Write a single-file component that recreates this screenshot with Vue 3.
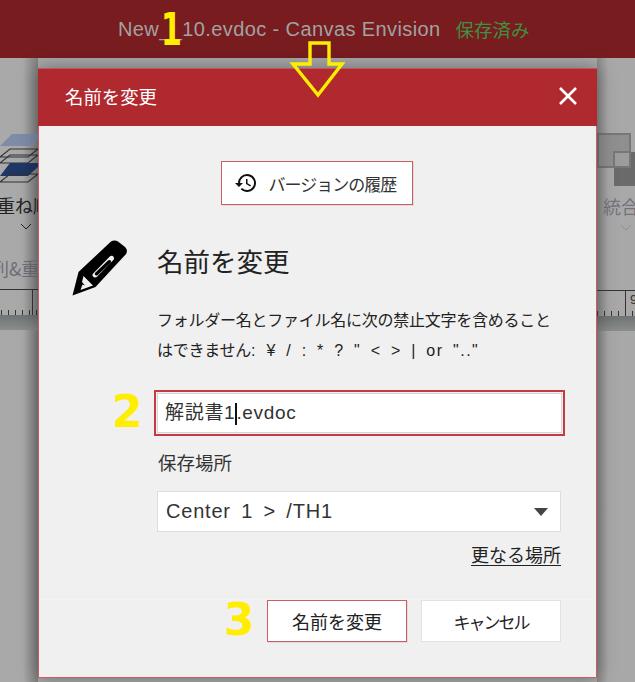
<script setup>
const ticks = Array.from({ length: 8 })
</script>

<template>
  <div class="page">
    <header class="topbar">
      <span class="doc">New__10.evdoc - Canvas Envision</span>
      <span class="saved">保存済み</span>
    </header>

    <div class="stage">
      <aside class="side side-left">
        <svg class="layers" width="38" height="52" viewBox="0 0 38 52">
          <path d="M12 0H38V6L30 12H0Z" fill="#7e8ca8" />
          <path d="M10 15H38L28 23H0Z" fill="none" stroke="#333" stroke-width="1.2" />
          <path d="M10 21H38L28 29H0Z" fill="none" stroke="#333" stroke-width="1.2" />
          <path d="M10 29H38V33L28 42H0Z" fill="#1f3764" />
          <path d="M10 40H38L28 48H0Z" fill="none" stroke="#333" stroke-width="1.2" />
        </svg>
        <div class="cut-label dark">重ね順</div>
        <svg class="chev" width="12" height="7" viewBox="0 0 12 7"><path d="M1 1L6 6L11 1" fill="none" stroke="#222" stroke-width="1" /></svg>
        <div class="group-label">列&amp;重ね</div>
        <div class="ruler ruler-left">
          <i v-for="(t, i) in ticks" :key="i" class="tick"></i>
          <i class="mark"></i>
        </div>
        <div class="shade"></div>
      </aside>

      <section class="modal">
        <div class="modal-head">
          <span class="modal-title">名前を変更</span>
          <svg class="close" width="20" height="20" viewBox="0 0 20 20">
            <path d="M2 2L18 18M18 2L2 18" stroke="#fff" stroke-width="2.6" fill="none" />
          </svg>
        </div>

        <div class="modal-body">
          <button class="history">
            <svg width="24" height="24" viewBox="0 0 24 24">
              <path fill="#111" d="M13 3a9 9 0 0 0-9 9H1l3.9 3.9.1.1 4-4H6a7 7 0 1 1 2.05 4.95L6.63 18.36A9 9 0 1 0 13 3zm-1 5v5l4.28 2.54.72-1.21-3.5-2.08V8z" />
            </svg>
            <span>バージョンの履歴</span>
          </button>

          <div class="intro">
            <svg class="pencil" width="58" height="58" viewBox="0 0 58 58">
              <path fill="#000" d="M40 1.5c2-1.5 5-1.5 7 0l7 5.5c2.2 2 2.500 5 .8 7.200L24.500 47 1.500 55.500 7.500 32z" />
              <path fill="#f0f0f0" d="M38.800 16.500c1.400-1.300 3.200-.5 3.800.4.700 1 .6 2.100-.5 3.300L26 36.800c-1.400 1.300-3.200.8-4-.2-.8-1-.7-2.300.4-3.400z" />
              <path fill="#000" d="M37 20.500c.8-.8 2.100-.7 2.700 0 .6.700.5 1.700-.2 2.400L26.800 35c-.8.700-1.900.7-2.500 0-.6-.7-.6-1.700.2-2.400z" />
              <path fill="#f0f0f0" d="M12.500 36l9.500 9.500-12.500 4.500 2-5.500 2.500 1-3-3.500z" />
            </svg>
            <div class="intro-text">
              <h2>名前を変更</h2>
              <p>フォルダー名とファイル名に次の禁止文字を含めることはできません<span class="chars">: ¥ / : * ? " &lt; &gt; | or ".."</span></p>
            </div>
          </div>

          <div class="name-field">
            <div class="name-inner">解説書1<i class="caret"></i>.evdoc</div>
          </div>

          <label class="place-label">保存場所</label>
          <div class="select">
            <span>Center 1 &gt; /TH1</span>
            <i class="arrow"></i>
          </div>
          <a class="more">更なる場所</a>
        </div>

        <div class="modal-foot">
          <button class="btn btn-primary">名前を変更</button>
          <button class="btn btn-cancel">キャンセル</button>
        </div>
      </section>

      <aside class="side side-right">
        <svg class="merge" width="38" height="54" viewBox="0 0 38 54">
          <rect x="1" y="1" width="32" height="33" fill="#8f8f8f" stroke="#777" stroke-width="2" />
          <rect x="17" y="19" width="21" height="34" fill="#6a6a6a" />
          <rect x="17" y="19" width="16" height="15" fill="#9c9c9c" stroke="#777" stroke-width="2" />
        </svg>
        <div class="cut-label">統合</div>
        <svg class="chev chev-right" width="12" height="7" viewBox="0 0 12 7"><path d="M1 1L6 6L11 1" fill="none" stroke="#8e8e8e" stroke-width="1" /></svg>
        <div class="ruler ruler-right">
          <b>9</b>
          <i class="mark"></i>
          <i v-for="(t, i) in ticks" :key="i" class="tick"></i>
        </div>
        <div class="shade"></div>
      </aside>
    </div>

    <div class="note note-1">1</div>
    <svg class="down-arrow" width="58" height="58" viewBox="0 0 58 58">
      <path d="M21 2H40V23H53L29 54 4 23H21Z" fill="none" stroke="#ffee00" stroke-width="3.400" />
    </svg>
    <div class="note note-2">2</div>
    <div class="note note-3">3</div>
  </div>
</template>

<style scoped>
.page {
  position: relative;
  width: 635px;
  height: 682px;
  overflow: hidden;
  background: #a8a8a8;
  font-family: "Noto Sans CJK JP", "Noto Sans", sans-serif;
}
.topbar {
  height: 58px;
  box-sizing: border-box;
  padding: 16px 0 0 118px;
  background: #781c20;
  display: flex;
  gap: 15px;
  font-size: 20px;
  line-height: 27px;
}
.doc {
  color: #a2a2a2;
  font-family: "Liberation Sans", sans-serif;
  letter-spacing: 0.02em;
}
.saved {
  color: #3d9140;
  font-size: 18.5px;
}
.stage {
  display: grid;
  grid-template-columns: 38px 559px 38px;
  height: 624px;
  box-sizing: border-box;
  padding-top: 10px;
}
.side {
  overflow: hidden;
  display: flex;
  flex-direction: column;
  white-space: nowrap;
  margin-top: -10px;
  background: linear-gradient(90deg, #a9a9a9, #a2a2a2);
}
.side-left { background: linear-gradient(90deg, #a9a9a9 60%, #808080); }
.side-right { background: linear-gradient(90deg, #8a8a8a, #a8a8a8 30%); }
.layers { margin-top: 76px; display: block; flex: none; }
.cut-label {
  font-size: 18px;
  line-height: 24px;
  color: #74747c;
}
.cut-label.dark { color: #222; margin: 7px 0 0 -3px; }
.chev { margin: 6px 0 0 20px; flex: none; }
.group-label {
  font-size: 18px;
  line-height: 24px;
  color: #6e6e78;
  margin: 26px 0 0 -9px;
}
.ruler {
  height: 26px;
  flex: none;
  border-top: 1px solid #333;
  box-sizing: border-box;
  display: flex;
  align-items: flex-end;
  gap: 6px;
  position: relative;
}
.tick {
  width: 1px;
  height: 5px;
  background: #333;
  flex: none;
}
.mark {
  position: absolute;
  width: 1px;
  top: 0;
  bottom: 0;
  background: #333;
}
.ruler-left { margin-top: 9px; padding-left: 1px; }
.ruler-left .mark { left: 32px; }
.ruler-right .mark { left: 28px; }
.ruler-right { margin-top: 59px; }
.ruler-right b {
  position: absolute;
  left: 33px;
  top: 1px;
  font-size: 13px;
  font-weight: 400;
  color: #333;
  font-family: "Liberation Sans", sans-serif;
}
.shade {
  height: 15px;
  flex: none;
  background: linear-gradient(#6f7375, #8c8c8c);
}
.merge { margin-top: 75px; display: block; flex: none; }
.side-right .cut-label { margin: 7px 0 0 6px; }
.chev-right { margin: 6px 0 0 23px; }

.modal {
  height: 610px;
  box-sizing: border-box;
  background: #f0f0f0;
  border: 1px solid #cf5c62;
  border-top: 0;
  box-shadow: 0 0 18px rgba(0, 0, 0, 0.35);
  display: flex;
  flex-direction: column;
  position: relative;
}
.modal-head {
  height: 58px;
  flex: none;
  background: #b0292e;
  margin: 0 -1px;
  border-top: 1px solid #c0565b;
  box-sizing: border-box;
  display: flex;
  align-items: center;
  justify-content: space-between;
  padding: 0 19px 3px 27px;
}
.modal-title {
  color: #fff;
  font-size: 18.4px;
}
.close { display: block; }
.modal-body {
  flex: 1;
  display: flex;
  flex-direction: column;
  padding: 35px 35px 0 33px;
  min-height: 0;
}
.history {
  align-self: center;
  margin: 0;
  width: 192px;
  height: 44px;
  background: #fff;
  border: 1px solid #cf5c62;
  box-shadow: 1px 1px 0 #ddd;
  display: flex;
  align-items: center;
  gap: 11px;
  padding: 0 0 0 12px;
  font-family: inherit;
  font-size: 17px;
  letter-spacing: -1px;
  color: #333;
}
.intro {
  display: flex;
  margin-top: 32px;
  margin-left: -1px;
  align-items: flex-start;
}
.pencil {
  flex: none;
  margin: 3px 28px 0 0;
}
.intro-text h2 {
  margin: 5px 0 0;
  font-weight: 400;
  font-size: 26.500px;
  line-height: 38px;
  color: #222;
}
.intro-text p {
  margin: 24px 0 0;
  font-size: 16px;
  letter-spacing: -0.25px;
  line-height: 30px;
  width: 405px;
  color: #222;
}
.chars {
  letter-spacing: 1.5px;
  word-spacing: 3.500px;
  font-family: "Liberation Sans", sans-serif;
}
.name-field {
  margin: 24px -4px 0 82px;
  height: 46px;
  box-sizing: border-box;
  border: 2px solid #c33a42;
  padding: 1px;
}
.name-inner {
  height: 40px;
  box-sizing: border-box;
  background: #fff;
  border: 1px solid #d6d6d6;
  padding-left: 7px;
  font-size: 19px;
  letter-spacing: 0.7px;
  line-height: 38px;
  color: #333;
  display: flex;
  font-family: "Liberation Sans", "Noto Sans CJK JP", sans-serif;
}
.caret {
  width: 2px;
  height: 22px;
  margin: 9px -1px 0 0;
  background: #111;
  flex: none;
}
.place-label {
  display: block;
  margin: 13px 0 0 86px;
  font-size: 18.500px;
  line-height: 26px;
  color: #333;
}
.select {
  margin: 16px 0 0 85px;
  height: 41px;
  box-sizing: border-box;
  background: #fff;
  border: 1px solid #dedede;
  display: flex;
  align-items: center;
  justify-content: space-between;
  padding: 0 12px 0 8px;
  font-size: 20px;
  color: #333;
  font-family: "Liberation Sans", sans-serif;
  letter-spacing: 0.8px;
  word-spacing: 4px;
}
.arrow {
  width: 0;
  height: 0;
  border-left: 7px solid transparent;
  border-right: 7px solid transparent;
  border-top: 8px solid #444;
}
.more {
  align-self: flex-end;
  margin-top: 10px;
  font-size: 18px;
  line-height: 25px;
  color: #222;
  border-bottom: 1px solid #222;
  text-decoration: none;
  height: 23px;
}
.modal-foot {
  height: 78px;
  flex: none;
  box-sizing: border-box;
  border-top: 1px solid #f3f3f3;
  display: flex;
  justify-content: flex-end;
  gap: 14px;
  padding-right: 35px;
}
.btn {
  width: 140px;
  height: 42px;
  margin: 0;
  background: #fff;
  border: 1px solid #e0e2e8;
  font-family: inherit;
  font-size: 18px;
  color: #222;
  padding: 0;
}
.btn-cancel {
  font-size: 17px;
  letter-spacing: -2px;
}
.btn-primary {
  border-color: #cf5c62;
  box-shadow: 1px 1px 0 #ddd;
}

.note {
  position: absolute;
  color: #ffee00;
  font-family: "DejaVu Sans", sans-serif;
  font-weight: 700;
  font-size: 44px;
  line-height: 1;
}
.note-1 { left: 156px; top: 8px; transform: scaleX(0.68); }
.note-2 { left: 112px; top: 390px; }
.note-3 { left: 224px; top: 598px; }
.down-arrow {
  position: absolute;
  left: 289px;
  top: 41px;
}
</style>
